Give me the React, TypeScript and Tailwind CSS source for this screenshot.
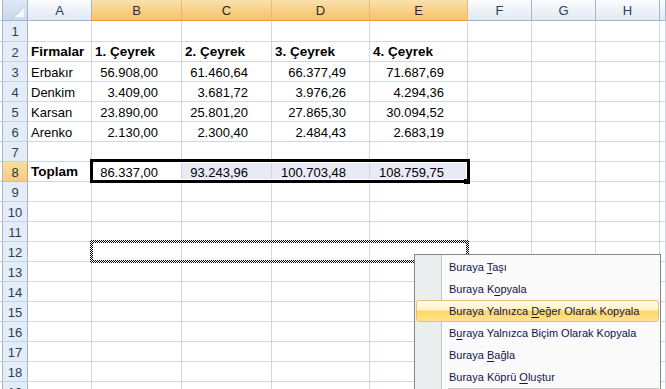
const cols = [
  { key: "A", w: "w-[64px]", sel: false },
  { key: "B", w: "w-[90px]", sel: true },
  { key: "C", w: "w-[90px]", sel: true },
  { key: "D", w: "w-[98px]", sel: true },
  { key: "E", w: "w-[98px]", sel: true },
  { key: "F", w: "w-[64px]", sel: false },
  { key: "G", w: "w-[64px]", sel: false },
  { key: "H", w: "w-[64px]", sel: false },
  { key: "", w: "flex-1", sel: false },
]

const data: Record<number, { cells: string[]; bold?: boolean; header?: boolean }> = {
  2: { cells: ["Firmalar", "1. Çeyrek", "2. Çeyrek", "3. Çeyrek", "4. Çeyrek"], header: true },
  3: { cells: ["Erbakır", "56.908,00", "61.460,64", "66.377,49", "71.687,69"] },
  4: { cells: ["Denkim", "3.409,00", "3.681,72", "3.976,26", "4.294,36"] },
  5: { cells: ["Karsan", "23.890,00", "25.801,20", "27.865,30", "30.094,52"] },
  6: { cells: ["Arenko", "2.130,00", "2.300,40", "2.484,43", "2.683,19"] },
  8: { cells: ["Toplam", "86.337,00", "93.243,96", "100.703,48", "108.759,75"], bold: true },
}

const rows = Array.from({ length: 19 }, (_, i) => i + 1)

const menu = [
  { pre: "Buraya ", u: "T", post: "aşı" },
  { pre: "Buraya K", u: "o", post: "pyala" },
  { pre: "Buraya Yalnızca ", u: "D", post: "eğer Olarak Kopyala", hot: true },
  { pre: "B", u: "u", post: "raya Yalnızca Biçim Olarak Kopyala" },
  { pre: "Buraya ", u: "B", post: "ağla" },
  { pre: "Buraya Köprü ", u: "O", post: "luştur" },
]

const ants = "absolute bg-[image:repeating-conic-gradient(#000_0_25%,#fff_0_50%)] bg-[length:2px_2px]"

function Cell({ row, col }: { row: number; col: number }) {
  const d = data[row]
  const text = d?.cells[col] ?? ""
  const w = cols[col].w
  const tinted = row === 8 && col >= 2 && col <= 4
  const bold = d?.header || (d?.bold && col === 0)
  const right = !d?.header && col >= 1 && col <= 4
  return (
    <div
      className={`${w} flex items-center pt-[2px] overflow-hidden whitespace-nowrap border-r border-b border-[#d0d7e5] ${
        tinted ? "bg-[#e8eaf5]" : "bg-white"
      } ${right ? "justify-end pr-[23px]" : "pl-[3px]"} ${bold ? "font-bold text-[13.5px]" : "text-[13px]"}`}
    >
      {text}
    </div>
  )
}

export default function App() {
  return (
    <div className="relative w-[666px] h-[389px] overflow-hidden bg-white font-['Liberation_Sans',Arial,sans-serif] text-black">
      {/* column headers */}
      <div className="flex h-[21px]">
        <div className="w-[2px] border-b border-[#b8c8dc]" />
        <div className="w-[26px] border-l border-r border-b border-[#9eb6ce] bg-[linear-gradient(to_bottom,#dfe8f5,#c9d8ec)] flex items-end justify-end p-[2px]">
          <svg width="12" height="12" viewBox="0 0 12 12">
            <polygon points="12,0 12,12 0,12" fill="#f4f7fb" stroke="#b3c4da" strokeWidth="0.8" />
          </svg>
        </div>
        {cols.map((c, i) => (
          <div
            key={i}
            className={`${c.w} flex items-center justify-center pt-[1px] text-[13px] border-r border-b ${
              c.sel
                ? "border-r-[#f0b868] border-b-[#f29536] bg-[linear-gradient(to_bottom,#fae0ad,#f4c468)] text-[#2b2b2b]"
                : "border-[#9eb6ce] bg-[linear-gradient(to_bottom,#fafcfe,#e2e9f2)] text-[#2b3f5a]"
            }`}
          >
            {c.key}
          </div>
        ))}
      </div>

      {/* rows */}
      {rows.map((r) => (
        <div key={r} className={`flex ${r === 1 ? "h-[21px]" : "h-[20px]"}`}>
          <div className="w-[2px] border-b border-[#b8c8dc]" />
          <div
            className={`w-[26px] flex items-center justify-center pt-[2px] text-[13px] border-l border-l-[#9eb6ce] border-r border-b ${
              r === 8
                ? "border-r-[#f29536] border-b-[#f0b868] bg-[linear-gradient(to_bottom,#fadca2,#f6cd80)] text-[#2b2b2b]"
                : "border-r-[#9eb6ce] border-b-[#c5d3e5] bg-[#e4ecf7] text-[#2b3f5a]"
            }`}
          >
            {r}
          </div>
          {cols.map((c, ci) => (
            <Cell key={ci} row={r} col={ci} />
          ))}
        </div>
      ))}

      {/* active selection B8:E8 */}
      <div className="absolute left-[90px] top-[159px] w-[380px] h-[24px] border-[3px] border-black">
        <div className="w-full h-full border border-white" />
      </div>
      <div className="absolute left-[464px] top-[179px] w-[6px] h-[5px] bg-black" />

      {/* marching ants B12:E12 */}
      <div className={`${ants} left-[90px] top-[240px] w-[379px] h-[3px]`} />
      <div className={`${ants} left-[90px] top-[260px] w-[379px] h-[3px]`} />
      <div className={`${ants} left-[90px] top-[240px] w-[3px] h-[23px]`} />
      <div className={`${ants} left-[466px] top-[240px] w-[3px] h-[23px]`} />

      {/* context menu */}
      <div className="absolute left-[414px] top-[254px] w-[247px] h-[150px] border border-[#868686] px-[1px] pt-[1px] bg-[linear-gradient(to_right,#e9eeee_26px,#c5c5c5_26px,#c5c5c5_27px,#ffffff_27px,#ffffff_28px,#fafafa_28px)] text-[11px] text-[#15154a]">
        {menu.map((m) => (
          <div
            key={m.pre + m.post}
            className={`h-[22px] flex items-center pl-[32px] border rounded-[3px] whitespace-pre ${
              m.hot
                ? "border-[#e0c36e] bg-[linear-gradient(to_bottom,#fffcef_0%,#fff1c2_45%,#ffd65e_52%,#ffe490_100%)]"
                : "border-transparent"
            }`}
          >
            <span>
              {m.pre}
              <u className="underline-offset-2">{m.u}</u>
              {m.post}
            </span>
          </div>
        ))}
        <div className="ml-[32px] h-[1px] bg-[#c5c5c5]" />
      </div>
    </div>
  )
}
